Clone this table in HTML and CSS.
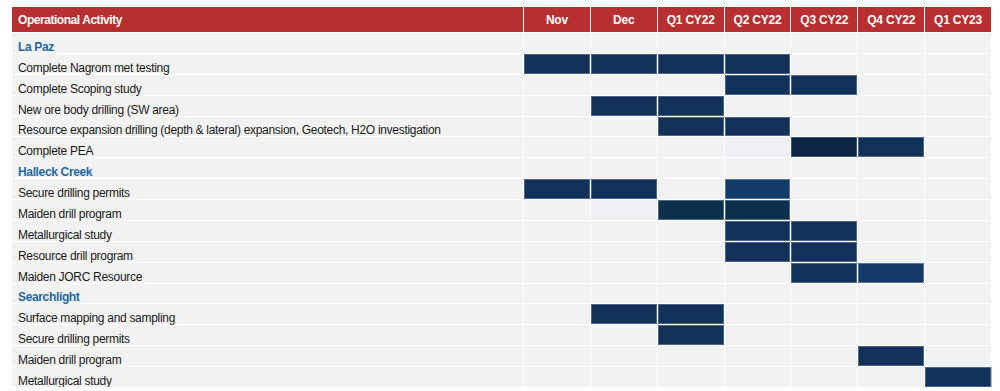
FILE: index.html
```html
<!DOCTYPE html>
<html>
<head>
<meta charset="utf-8">
<link rel="stylesheet" href="styles.css">
</head>
<body>
<div class="gantt">
  <div class="h first">Operational Activity</div>
  <div class="h">Nov</div><div class="h">Dec</div><div class="h">Q1 CY22</div><div class="h">Q2 CY22</div><div class="h">Q3 CY22</div><div class="h">Q4 CY22</div><div class="h">Q1 CY23</div>

  <div class="l sec">La Paz</div>
  <div class="c"></div><div class="c"></div><div class="c"></div><div class="c"></div><div class="c"></div><div class="c"></div><div class="c"></div>

  <div class="l">Complete Nagrom met testing</div>
  <div class="c b"></div><div class="c b"></div><div class="c b"></div><div class="c b"></div><div class="c"></div><div class="c"></div><div class="c"></div>

  <div class="l">Complete Scoping study</div>
  <div class="c"></div><div class="c"></div><div class="c"></div><div class="c b"></div><div class="c b"></div><div class="c"></div><div class="c"></div>

  <div class="l">New ore body drilling (SW area)</div>
  <div class="c"></div><div class="c b"></div><div class="c b"></div><div class="c"></div><div class="c"></div><div class="c"></div><div class="c"></div>

  <div class="l">Resource expansion drilling (depth &amp; lateral) expansion, Geotech, H2O investigation</div>
  <div class="c"></div><div class="c"></div><div class="c b"></div><div class="c b"></div><div class="c"></div><div class="c"></div><div class="c"></div>

  <div class="l">Complete PEA</div>
  <div class="c"></div><div class="c"></div><div class="c"></div><div class="c pale"></div><div class="c b dark"></div><div class="c b"></div><div class="c"></div>

  <div class="l sec">Halleck Creek</div>
  <div class="c"></div><div class="c"></div><div class="c"></div><div class="c"></div><div class="c"></div><div class="c"></div><div class="c"></div>

  <div class="l">Secure drilling permits</div>
  <div class="c b"></div><div class="c b"></div><div class="c"></div><div class="c b light"></div><div class="c"></div><div class="c"></div><div class="c"></div>

  <div class="l">Maiden drill program</div>
  <div class="c"></div><div class="c pale"></div><div class="c b teal"></div><div class="c b teal"></div><div class="c"></div><div class="c"></div><div class="c"></div>

  <div class="l">Metallurgical study</div>
  <div class="c"></div><div class="c"></div><div class="c"></div><div class="c b"></div><div class="c b"></div><div class="c"></div><div class="c"></div>

  <div class="l">Resource drill program</div>
  <div class="c"></div><div class="c"></div><div class="c"></div><div class="c b"></div><div class="c b"></div><div class="c"></div><div class="c"></div>

  <div class="l">Maiden JORC Resource</div>
  <div class="c"></div><div class="c"></div><div class="c"></div><div class="c"></div><div class="c b"></div><div class="c b light"></div><div class="c"></div>

  <div class="l sec">Searchlight</div>
  <div class="c"></div><div class="c"></div><div class="c"></div><div class="c"></div><div class="c"></div><div class="c"></div><div class="c"></div>

  <div class="l">Surface mapping and sampling</div>
  <div class="c"></div><div class="c b"></div><div class="c b"></div><div class="c"></div><div class="c"></div><div class="c"></div><div class="c"></div>

  <div class="l">Secure drilling permits</div>
  <div class="c"></div><div class="c"></div><div class="c b"></div><div class="c"></div><div class="c"></div><div class="c"></div><div class="c"></div>

  <div class="l">Maiden drill program</div>
  <div class="c"></div><div class="c"></div><div class="c"></div><div class="c"></div><div class="c"></div><div class="c b"></div><div class="c"></div>

  <div class="l">Metallurgical study</div>
  <div class="c"></div><div class="c"></div><div class="c"></div><div class="c"></div><div class="c"></div><div class="c"></div><div class="c b last"></div>
</div>
</body>
</html>
```

FILE: styles.css
```css
html, body {
  margin: 0;
  padding: 0;
  background: #ffffff;
}

body {
  padding: 7px 0 0 12px;
  font-family: "Liberation Sans", Arial, sans-serif;
  font-size: 12px;
  color: #1a1a1a;
}

.gantt {
  display: grid;
  width: 979px;
  height: 380px;
  grid-template-columns: 511px repeat(7, minmax(0, 1fr));
  grid-template-rows: 25px repeat(17, minmax(0, 1fr));
  gap: 1px;
  background: #ffffff;
}

.h {
  background: #b72f30;
  color: #ffffff;
  font-weight: bold;
  display: flex;
  align-items: center;
  justify-content: center;
  letter-spacing: -0.2px;
}

.h.first {
  justify-content: flex-start;
  padding-left: 6px;
  letter-spacing: -0.45px;
}

.l {
  background: #f2f2f2;
  display: flex;
  align-items: flex-end;
  padding-left: 6px;
  line-height: 11px;
  white-space: nowrap;
  letter-spacing: -0.3px;
}

.l.sec {
  color: #1f67a3;
  font-weight: bold;
  letter-spacing: -0.35px;
}

.c {
  background: #f2f2f2;
}

.c.pale {
  background: #eef0f4;
}

.c.b {
  background: #11315b;
  box-shadow: inset 0 0 0 1px #4d6687;
}

.c.b.dark {
  background: #0c2546;
  box-shadow: inset 0 0 0 1px #3e5574;
}

.c.b.light {
  background: #143b68;
  box-shadow: inset 0 0 0 1px #5675a0;
}

.c.b.teal {
  background: #0a304c;
  box-shadow: inset 0 0 0 1px #4a6880;
}

.c.b.last {
  box-shadow: inset 0 0 0 1px #4d6687, 1px 0 0 #a9b6c6;
}
```
